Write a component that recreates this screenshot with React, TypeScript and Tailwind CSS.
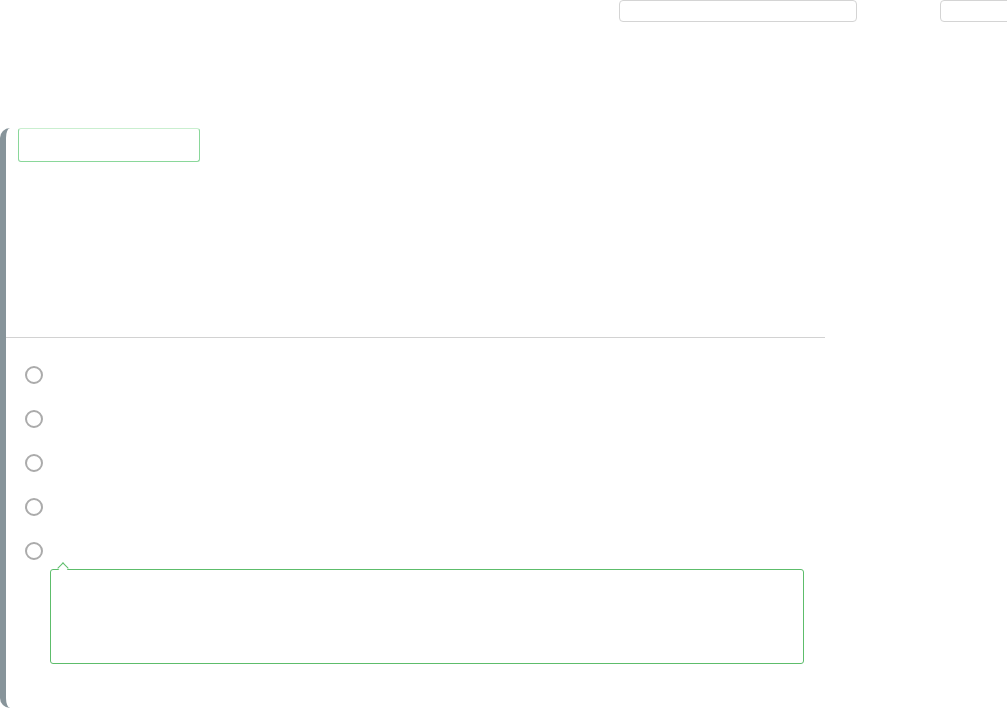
const options = [0, 1, 2, 3, 4];

export default function App() {
  return (
    <div className="w-[1007px] h-[708px] overflow-hidden bg-white font-['Liberation_Sans',sans-serif]">
      {/* top filters */}
      <div className="flex h-[128px] items-start">
        <input className="ml-[619px] h-[22px] w-[238px] shrink-0 rounded-[4px] border border-[#d4d4d4] bg-white" />
        <input className="ml-[83px] h-[22px] w-[80px] shrink-0 rounded-[4px] border border-[#d4d4d4] bg-white" />
      </div>

      {/* question card */}
      <div className="h-[580px] w-[825px] rounded-l-[10px] border-l-[6px] border-[#87949a]">
        <div className="h-[209px] pl-[12px]">
          <input className="h-[34px] w-[182px] rounded-[3px] border border-[#8ad79a] border-t-[#c9efcf] bg-white" />
        </div>
        <div className="h-px bg-[#d2d2d2]" />
        <div className="flex flex-col pt-[28px]">
          {options.map((o) => (
            <div key={o} className="flex h-[44px] items-start pl-[19px]">
              <span className="block h-[18px] w-[18px] rounded-full border-[2px] border-[#ababab]" />
            </div>
          ))}
        </div>
        <div className="relative ml-[44px] mt-[-17px] h-[95px] w-[754px] rounded-[3px] border border-[#5dbd6b] bg-white">
          <span className="absolute left-[8px] top-[-6px] h-[8px] w-[8px] rotate-45 border-l border-t border-[#5dbd6b] bg-white" />
        </div>
      </div>
    </div>
  );
}
